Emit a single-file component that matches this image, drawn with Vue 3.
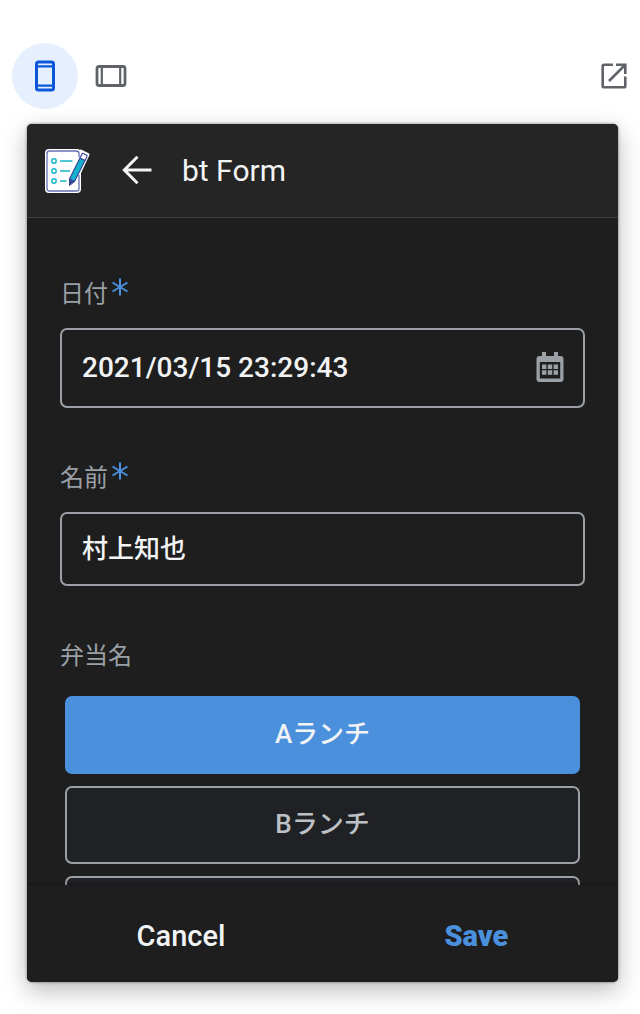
<script setup>
import { ref } from 'vue'

const device = ref('phone')
const date = ref('2021/03/15 23:29:43')
const name = ref('村上知也')
const lunches = ['Aランチ', 'Bランチ', '']
const lunch = ref('Aランチ')
</script>

<template>
  <main class="preview">
    <nav class="toolbar" aria-label="Preview">
      <button class="tool" :class="{ active: device === 'phone' }" type="button" aria-label="Phone" @click="device = 'phone'">
        <svg width="20" height="32" viewBox="0 0 20 32" fill="none" stroke="currentColor">
          <rect x="1.5" y="2" width="17" height="28" rx="2" stroke-width="3" />
          <path d="M2 6.4H18M2 25.6H18" stroke-width="2.2" />
        </svg>
      </button>
      <button class="tool" :class="{ active: device === 'tablet' }" type="button" aria-label="Tablet" @click="device = 'tablet'">
        <svg width="32" height="24" viewBox="0 0 32 24" fill="none" stroke="currentColor">
          <rect x="2" y="2.5" width="28" height="19" rx="2" stroke-width="2.8" />
          <path d="M6.8 2V22M25.2 2V22" stroke-width="2.2" />
        </svg>
      </button>
      <button class="tool open" type="button" aria-label="Open in new window">
        <svg width="28" height="28" viewBox="0 0 28 28" fill="none" stroke="currentColor" stroke-width="2.6">
          <path d="M13 2.7H4Q2.7 2.7 2.7 4V24Q2.7 25.3 4 25.3H24Q25.3 25.3 25.3 24V14.5" />
          <path d="M16 2.7H25.3V12M25 3L9 19" />
        </svg>
      </button>
    </nav>

    <form class="card" @submit.prevent>
      <header class="header">
        <svg class="logo" width="48" height="48" viewBox="0 0 48 48" fill="none">
          <rect x="2" y="2" width="36" height="44" rx="4" fill="#fff" />
          <path d="M38 4L45 7.500L31.500 36.500L25 40.500L24 32Z" fill="#fff" stroke="#fff" stroke-width="3" stroke-linejoin="round" />
          <path d="M33 4H6.500Q4 4 4 6.500V41.500Q4 44 6.500 44H33.500Q36 44 36 41.500V28M36 10V6.500Q36 4 33 4" stroke="#6670b5" stroke-width="1.300" />
          <g stroke="#17b5c8" stroke-width="1.500">
            <circle cx="11" cy="14" r="2.200" />
            <circle cx="11" cy="24" r="2.200" />
            <circle cx="11" cy="34" r="2.200" />
            <path d="M17 14H29.500M17 24H27M17 34H23.500" />
          </g>
          <path d="M37 11L42 13.500L31.500 34.500L26.500 32Z" fill="#13b4cb" stroke="#39479b" stroke-width="1.200" />
          <path d="M37 11L39.200 6.800Q39.600 6.200 40.300 6.500L43.700 8.200Q44.300 8.700 44 9.500L42 13.500Z" fill="#fff" stroke="#39479b" stroke-width="1.200" />
          <path d="M26.500 32L31.500 34.500L26.500 38.500Z" fill="#39479b" stroke="#39479b" />
        </svg>
        <button class="back" type="button" aria-label="Back">
          <svg width="32" height="30" viewBox="0 0 32 30" fill="none" stroke="currentColor" stroke-width="3">
            <path d="M30.500 14H3.500M16.500 .8L3.300 14L16.500 27.200" />
          </svg>
        </button>
        <h1>bt Form</h1>
      </header>

      <div class="fields">
        <section class="field">
          <label for="date">日付<svg class="star" width="18" height="18" viewBox="0 0 18 18" stroke="currentColor" stroke-width="2"><path d="M9 .5V17.500M1.500 4.500L16.500 13.500M16.500 4.500L1.500 13.500" /></svg></label>
          <div class="box tall">
            <input id="date" v-model="date" class="date" type="text" required />
            <button class="pick" type="button" aria-label="Choose date">
              <svg width="28" height="34" viewBox="0 0 28 34" fill="currentColor">
                <path fill-rule="evenodd" d="M6 1H10V5H18V1H22V5H24.500Q27.500 5 27.500 8V28Q27.500 31 24.500 31H3.500Q.5 31 .5 28V8Q.5 5 3.500 5H6ZM3.800 11V27.500H24.200V11Z" />
                <path d="M6 13.500H10.400V18H6ZM11.800 13.500H16.200V18H11.800ZM17.600 13.500H22V18H17.600ZM6 19.200H10.400V23.700H6ZM11.800 19.200H16.200V23.700H11.800ZM17.600 19.200H22V23.700H17.600Z" />
              </svg>
            </button>
          </div>
        </section>

        <section class="field">
          <label for="name">名前<svg class="star" width="18" height="18" viewBox="0 0 18 18" stroke="currentColor" stroke-width="2"><path d="M9 .5V17.500M1.500 4.500L16.500 13.500M16.500 4.500L1.500 13.500" /></svg></label>
          <div class="box">
            <input id="name" v-model="name" type="text" required />
          </div>
        </section>

        <section class="field">
          <span id="lunch" class="caption">弁当名</span>
          <div class="options" role="group" aria-labelledby="lunch">
            <button
              v-for="item in lunches"
              :key="item"
              class="option"
              :class="{ selected: lunch === item }"
              type="button"
              :aria-pressed="lunch === item"
              @click="lunch = item"
            >{{ item }}</button>
          </div>
        </section>
      </div>

      <footer class="footer">
        <button type="button">Cancel</button>
        <button class="save" type="submit">Save</button>
      </footer>
    </form>
  </main>
</template>

<style>
body {
  background: #fff;
}
</style>

<style scoped>
* {
  box-sizing: border-box;
}

.preview {
  display: flex;
  flex-direction: column;
  height: 100vh;
  padding-bottom: 32px;
  font-family: Roboto, "Noto Sans CJK JP", sans-serif;
}

button {
  padding: 0;
  border: 0;
  background: none;
  color: inherit;
  font: inherit;
  cursor: pointer;
}

svg {
  display: block;
}

.toolbar {
  display: flex;
  flex: none;
  padding: 43px 4px 15px 12px;
}

.tool {
  display: grid;
  place-items: center;
  width: 66px;
  height: 66px;
  border-radius: 50%;
  color: #5f6368;
}

.tool.active {
  background: #e6effe;
  color: #0b57d8;
}

.open {
  width: 44px;
  margin-left: auto;
}

.card {
  display: flex;
  flex: 1;
  flex-direction: column;
  min-height: 0;
  margin: 0 22px 0 27px;
  overflow: hidden;
  border-radius: 5px;
  background: #1e1e1e;
  color: #f1f3f4;
  box-shadow: 0 0 3px rgba(0, 0, 0, 0.5), 0 8px 24px rgba(0, 0, 0, 0.28);
}

.header {
  display: flex;
  flex: none;
  align-items: center;
  height: 94px;
  padding: 0 16px;
  border-bottom: 1px solid #3c4043;
  background: #252525;
}

.back {
  margin: 0 29px 0 30px;
}

h1 {
  margin: 0;
  font-size: 30px;
  font-weight: 400;
  line-height: 36px;
}

.fields {
  display: flex;
  flex: 1;
  flex-direction: column;
  gap: 56px;
  min-height: 0;
  padding: 62px 33px 0;
  overflow-y: auto;
  scrollbar-width: none;
}

.field {
  flex: none;
}

label,
.caption {
  display: flex;
  gap: 3px;
  color: #9aa0a6;
  font-size: 24px;
  line-height: 28px;
}

.star {
  margin-top: -2px;
  color: #4a90dd;
}

.box {
  display: flex;
  align-items: center;
  height: 74px;
  margin-top: 20px;
  padding: 0 19px 0 20px;
  border: 2px solid #9aa0a6;
  border-radius: 7px;
}

.box.tall {
  height: 80px;
}

.pick {
  color: #9aa0a6;
}

input {
  flex: 1;
  min-width: 0;
  height: 40px;
  padding: 0;
  border: 0;
  outline: 0;
  background: none;
  color: #f1f3f4;
  font: 500 26px/40px Roboto, "Noto Sans CJK JP", sans-serif;
}

.date {
  font-size: 28px;
}

.options {
  display: flex;
  flex-direction: column;
  gap: 12px;
  padding: 26px 5px 0;
}

.option {
  height: 78px;
  padding-bottom: 8px;
  border: 2px solid #9aa0a6;
  border-radius: 7px;
  background: #202124;
  color: #bdc1c6;
  font-size: 26px;
  font-weight: 500;
}

.option.selected {
  border-color: #4a90dd;
  background: #4a90dd;
  color: #f1f3f4;
}

.footer {
  display: flex;
  flex: none;
  justify-content: space-around;
  height: 97px;
  padding-top: 4px;
  background: #1e1e1e;
  box-shadow: 0 -1px 3px rgba(0, 0, 0, 0.3);
  font-size: 29px;
  font-weight: 500;
}

.footer .save {
  color: #4a90dd;
  font-weight: 900;
}
</style>
